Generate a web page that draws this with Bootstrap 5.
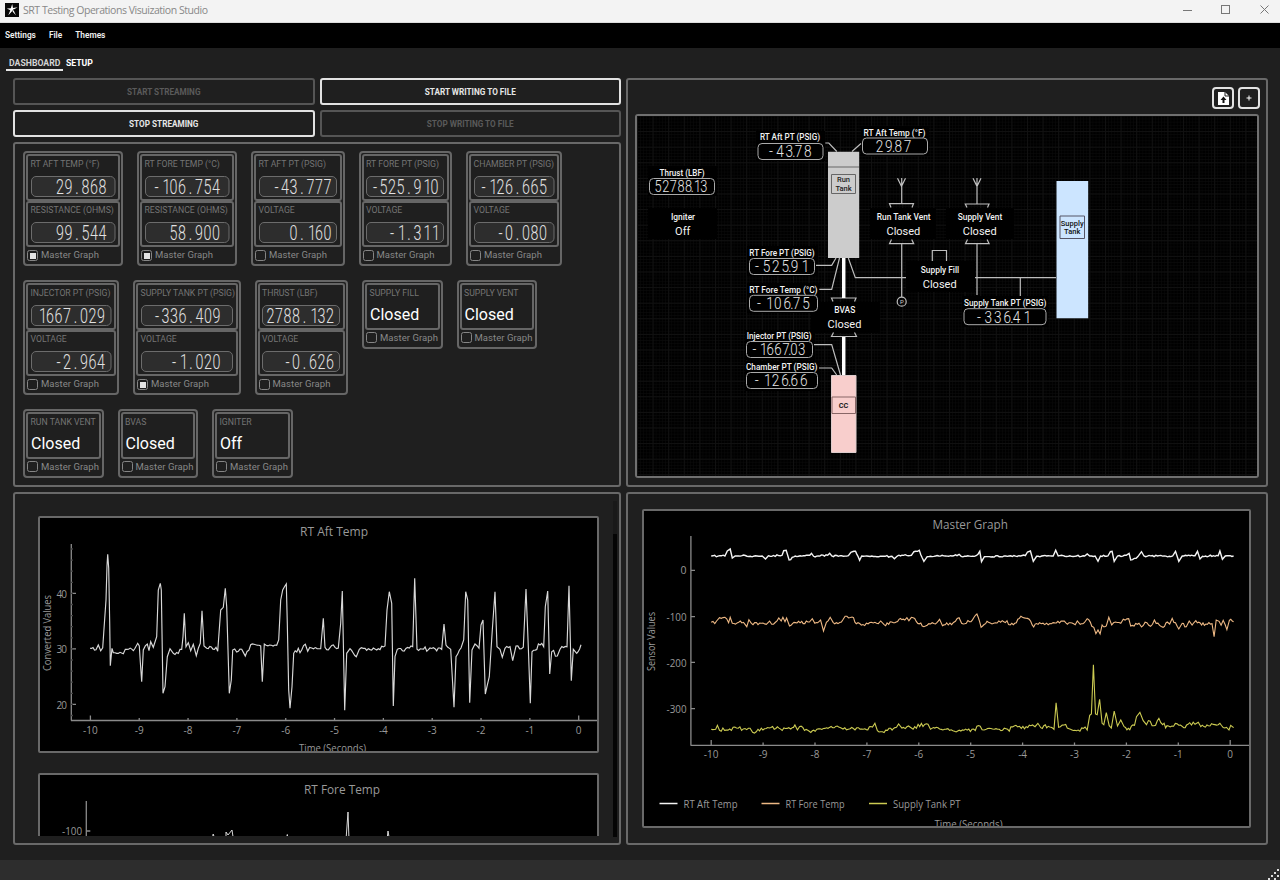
<!DOCTYPE html>
<html lang="en">
<head>
<meta charset="utf-8">
<title>SRT Testing Operations Visuization Studio</title>
<meta name="viewport" content="width=device-width, initial-scale=1">
<link rel="stylesheet" href="https://cdn.jsdelivr.net/npm/bootstrap@5.3.0/dist/css/bootstrap.min.css">
<style>
body{width:1280px;height:880px;overflow:hidden;background:#1f1f1f;font-family:Roboto,"Liberation Sans",sans-serif;font-size:9px;line-height:12px;color:#e6e6e6}
.titlebar{height:23px;background:#f3f3f3;color:#8c8c8c;font:11px/20px "Open Sans","Noto Sans",sans-serif;padding:0 10px 3px 5px;border-bottom:1px solid #ddd}
.menus{height:25px;background:#000;padding:0 0 2px 5px;gap:13px;font-size:8.3px;font-weight:600;color:#f2f2f2}
.tabs{height:30px;padding:8px 0 0 6px;font-size:8.7px;font-weight:700;color:#fff}
.tabs span{height:15px;padding:1px 1.5px 0;border-bottom:2px solid transparent}
.tabs .on{border-color:#e6e6e6;color:#d4d4d4;padding:1px 3px 0}
.workspace{height:767px;padding-left:13px;gap:5px}
.leftcol{width:608px;gap:5px}
.rightcol{width:642px;gap:5px}
.cmd{height:27px;border:2px solid #e2e2e2;border-radius:3px;background:transparent;color:#e6e6e6;font-size:8.2px;font-weight:700;padding:0;line-height:22px;flex:1}
.cmd:disabled{border-color:#555;color:#5a5a5a;opacity:1}
.pane{border:2px solid #696969;border-radius:3px}
.sensors{height:345px;padding:7px 8px;gap:14px}
.sensor{border:2px solid #666;border-radius:4px;padding:1px 1px 2px}
.reading{height:46.5px;border:2px solid #666;border-radius:3px;padding:1.5px 2.5px 0;color:#747474;font-size:8.7px;white-space:nowrap}
.reading svg{margin-top:6px;overflow:visible}
.state{font-size:16px;color:#fff;line-height:20px;margin-top:6.5px;padding-left:.5px}
.pick{height:14px;margin:1px 0 0 1px;color:#888;gap:3px;font-size:9.5px;white-space:nowrap;letter-spacing:.05px}
.pick i{width:11px;height:11px;border:1.5px solid #858585;border-radius:2.5px;flex:none}
.pick i.on{background:#e4e4e4;background-clip:content-box;padding:1.5px}
.pid{height:409px;padding:7px}
.tool{width:22px;height:22px;border:2px solid #e2e2e2;border-radius:4px}
.canvas{height:364px;border:2px solid #707070;border-radius:3px;overflow:hidden}
.graphs{height:353px;padding:14.5px 2px 7px 23px}
.scrollarea{width:561px;height:320px;margin-top:7.5px}
.plot{border:2px solid #696969;border-radius:2px;background:#000;overflow:hidden;flex:none}
.bar{width:4px;height:336px;margin-left:14px;margin-top:-7.5px;background:#050505;border-top:33px solid #191919}
.master{height:353px;padding:15px 15px 14px 14px}
.status{height:20px;background:#2d2d2d;margin-top:15px}
svg text{font-family:Roboto,sans-serif}
svg .ui{font-family:"Open Sans","Noto Sans",sans-serif;fill:#999}
</style>
</head>
<body class="d-flex flex-column m-0">
<header class="titlebar d-flex align-items-center justify-content-between flex-shrink-0">
  <div class="d-flex align-items-center" style="gap:4px">
    <svg width="14" height="14" viewBox="0 0 14 14"><path fill="#080808" d="M0 0h14v14H0z"/><path fill="#fff" d="M7.2 1l.8 4 4.6-.7-4.2 2.5 2.5 5.5-3.7-4-3.9 4 2-5-3.4-1.8 3.9-.2z"/><path stroke="#080808" stroke-width=".6" d="M5 12l4-6"/></svg>
    <svg width="190" height="18"><text class="ui" x="0" y="13" font-size="10.5" textLength="185" style="fill:#888">SRT Testing Operations Visuization Studio</text></svg>
  </div>
  <svg width="92" height="14" fill="none" stroke="#777"><path d="M5 7.5h9M82.5 2.5l8 8m0-8l-8 8"/><rect x="43.5" y="2.5" width="8" height="8"/></svg>
</header>
<nav class="menus d-flex align-items-center flex-shrink-0"><span>Settings</span><span>File</span><span>Themes</span></nav>
<nav class="tabs d-flex flex-shrink-0"><span class="on">DASHBOARD</span><span style="margin-left:1px">SETUP</span></nav>
<main class="workspace d-flex flex-shrink-0">
  <section class="leftcol d-flex flex-column">
    <div class="d-flex" style="gap:5px"><button class="cmd" disabled>START STREAMING</button><button class="cmd">START WRITING TO FILE</button></div>
    <div class="d-flex" style="gap:5px"><button class="cmd">STOP STREAMING</button><button class="cmd" disabled>STOP WRITING TO FILE</button></div>
    <div class="pane sensors d-flex flex-column" id="sensors"></div>
    <div class="pane graphs d-flex align-items-start">
      <div class="scrollarea overflow-hidden d-flex flex-column" style="gap:20px">
        <div class="plot" style="height:237px"><svg class="d-block" id="aft" width="557" height="233" viewBox="40 518 557 233"></svg></div>
        <div class="plot" style="height:237px"><svg class="d-block" id="fore" width="557" height="233" viewBox="40 775 557 233"></svg></div>
      </div>
      <div class="bar"></div>
    </div>
  </section>
  <section class="rightcol d-flex flex-column">
    <div class="pane pid">
      <div class="d-flex justify-content-end" style="gap:4px;height:26.5px;margin-right:-1px">
        <div class="tool"><svg class="d-block" width="18" height="18"><path fill="#fff" d="M4 3h7l4 4v9H4z"/><path stroke="#1f1f1f" fill="none" d="M11 3v4h4"/><path fill="#111" d="M9.5 7.5l3 3.5h-2v3h-2v-3h-2z"/></svg></div>
        <div class="tool"><svg class="d-block" width="18" height="18"><path stroke="#fff" d="M6.500 9h5M9 6.500v5"/></svg></div>
      </div>
      <div class="canvas"><svg class="d-block" id="diagram" width="620" height="360" viewBox="637 116 620 360"></svg></div>
    </div>
    <div class="pane master"><div class="plot" style="height:319px"><svg class="d-block" id="master" width="605" height="315" viewBox="644.5 511 605 315"></svg></div></div>
  </section>
</main>
<footer class="status d-flex justify-content-end align-items-end flex-shrink-0"><svg width="12" height="12" fill="#ddd"><path d="M9 1h2v2H9zM6 4h2v2H6zM9 7h2v2H9zM3 7h2v2H3zM6 10h2v2H6zM0 10h2v2H0z"/></svg></footer>
<script src="https://cdn.jsdelivr.net/npm/bootstrap@5.3.0/dist/js/bootstrap.bundle.min.js"></script>
<script>
// Readout text: one glyph per cell, right aligned at `last` (centre of last cell).
function lcd(value, last, base, pitch, size, inlineDot, color) {
  const k = Math.min(.8, pitch * .9 / (size * .535)), xs = []; let x = last;
  for (let i = value.length - 1; i >= 0; i--) {
    if (value[i] === '.' && inlineDot) xs.unshift(x + pitch * .5);
    else { xs.unshift(x + (value[i] === '1' ? 1.5 : 0)); x -= pitch; }
  }
  return `<text transform="scale(${k.toFixed(3)} 1)" x="${xs.map(v => (v / k).toFixed(1)).join(' ')}" y="${base}" text-anchor="middle" font-size="${size}" font-weight="300" fill="${color}">${value}</text>`;
}
const rows = [[
 [100,'RT AFT TEMP (°F)','29.868','RESISTANCE (OHMS)','99.544',8.5,1],
 [100,'RT FORE TEMP (°C)','-106.754','RESISTANCE (OHMS)','58.900',9,1],
 [93.5,'RT AFT PT (PSIG)','-43.777','VOLTAGE','0.160',5,0],
 [93.5,'RT FORE PT (PSIG)','-525.910','VOLTAGE','-1.311',5,0],
 [96,'CHAMBER PT (PSIG)','-126.665','VOLTAGE','-0.080',7,0]],[
 [96,'INJECTOR PT (PSIG)','1667.029','VOLTAGE','-2.964',6,0],
 [107.5,'SUPPLY TANK PT (PSIG)','-336.409','VOLTAGE','-1.020',12,1],
 [93.5,'THRUST (LBF)','2788.132','VOLTAGE','-0.626',5.5,0],
 [80.5,'SUPPLY FILL','Closed'],[80.5,'SUPPLY VENT','Closed']],[
 [80.5,'RUN TANK VENT','Closed'],[80.5,'BVAS','Closed'],[80.5,'IGNITER','Off']]];
const reading = (w, label, v, off) => `<div class="reading">${label}<svg class="d-block" width="${w - 15.5}" height="21"><rect x=".5" y=".5" width="${w - 16.5}" height="20" rx="4.5" fill="#2d2d2d" stroke="#6c6c6c"/>${lcd(v, w - 15.5 - off - 4.5, 17.8, 8.5, 20.5, false, '#e2e2e2')}</svg></div>`;
document.getElementById('sensors').innerHTML = rows.map(r => '<div class="d-flex align-items-start" style="gap:14px">' + r.map(([w, l, a, l2, b, off, on]) =>
 `<div class="sensor" style="width:${w}px">` + (b ? reading(w, l, a, off) + reading(w, l2, b, off) : `<div class="reading">${l}<div class="state">${a}</div></div>`) +
 `<div class="pick d-flex align-items-center"><i class="${on ? 'on' : ''}"></i>Master Graph</div></div>`).join('') + '</div>').join('');

const T = (x0, x1, y, s, size, cls = '', fill = '#f2f2f2', extra = '') => `<text class="${cls}" x="${x0}" y="${y}" textLength="${x1 - x0}" lengthAdjust="spacingAndGlyphs" font-size="${size}" ${cls ? '' : `fill="${fill}"`} ${extra}>${s}</text>`;
const C = (x, y, s, size, fill = '#f2f2f2', extra = '') => `<text x="${x}" y="${y}" text-anchor="middle" font-size="${size}" fill="${fill}" ${extra}>${s}</text>`;

// Piping diagram
(function () {
  let h = `<defs><pattern id="g1" x="637" y="115.5" width="3.12" height="3.12" patternUnits="userSpaceOnUse"><path d="M0 0H3.12M0 0V3.12" stroke="#0a0a0a" stroke-width="1"/></pattern><pattern id="g2" x="637" y="115.5" width="15.6" height="15.6" patternUnits="userSpaceOnUse"><path d="M0 .5H15.6M.5 0V15.6" stroke="#111"/></pattern></defs>
  <path fill="#000" d="M637 115h620v361H637z"/><path fill="url(#g1)" d="M637 115h620v361H637z"/><path fill="url(#g2)" d="M637 115h620v361H637z"/>`;
  h += '<g fill="#000">' + [[756,131,69,30],[861,126,68,30],[648,166,69,30],[648,208,69,31],[747,246,71,30],[747,283,73,30],[811,302,69,31],[745,330,70,30],[745,361,75,30],[870,208,66,31],[946,208,68,31],[906,261,69,31],[962,296,86,31]].map(r => `<rect x="${r[0]}" y="${r[1]}" width="${r[2]}" height="${r[3]}"/>`).join('') + '</g>';
  h += '<g fill="none" stroke="#bdbdbd" stroke-width="1.2"><path d="M825.3 143h3.5l8 8.5M861 143.5l-9 8M816 265.3h15.7L836 258M819.3 289.3h12.4L839.5 258M848.3 258l7 19.7H906M814 344.7h17.7L840.5 375M819 368h12.7l5 7"/><path d="M897.5 178.3l4 8 4-8M901.7 178v25.7M973 178.3l4 8 4-8M977 178v26M833 301.5l-1.5-3.5h24.5l-1.5 3.5M833.5 332.5l-2 4h25l-2-4M891 207.5l-1.5-3.8h24l-1.5 3.8M891.5 239.5l-2 4.2h24.2l-2-4.2M967 207.5l-1.7-3.5H989l-1.5 3.5M967.5 239.5l-2 4.2h23.6l-2-4.2"/><path d="M901.7 244v53M977 244v51M975 277.7h81M1020.3 278v18M932.3 261v-10.5h14.2V261"/><circle cx="901.7" cy="301.7" r="4.5"/></g>';
  h += '<path stroke="#fff" stroke-width="3.5" d="M843.7 258v40M843.7 337v38"/>' + C(901.8,304,'P',6,'#ccc');
  h += '<path fill="#ccc" d="M828 151.7h31.2v106.2H828z"/><path stroke="#666" fill="none" d="M828 167h31M831.5 174.5h24v19h-24z"/>' + C(843.5,182,'Run',7.5,'#222','font-weight="500"') + C(843.5,191,'Tank',7.5,'#222','font-weight="500"');
  h += '<path fill="#cce5ff" d="M1056.5 181h31.7v137.3h-31.7z"/><path stroke="#556" fill="none" d="M1060 216h24.5v22.5H1060z"/>' + C(1072.2,225.5,'Supply',7.5,'#111','font-weight="500"') + C(1072.2,234.3,'Tank',7.5,'#111','font-weight="500"');
  h += '<path fill="#f8cecc" stroke="#dcc" d="M831.5 375.5h24.5v77h-24.5z"/><path stroke="#866" fill="none" d="M832 397h23.5v16.5H832z"/>' + C(843.5,407.5,'CC',7.3,'#222','font-weight="700"');
  [[760,820,140,'RT Aft PT (PSIG)',758,143.5,65,'-43.78',807.7,9.2],[863.5,925.5,135.7,'RT Aft Temp (°F)',862.5,138,65,'29.87',907.5,9.3],[659.5,704.7,176,'Thrust (LBF)',649.5,178.5,65,'52788.13',703.8,7.6],[749.3,814.7,256,'RT Fore PT (PSIG)',749.5,258.5,65,'-525.91',804,9.4],[749.3,817.5,293,'RT Fore Temp (°C)',749.5,295.3,68,'-106.75',806,9.4],[746.7,811.7,339,'Injector PT (PSIG)',746.5,341.5,66,'-1667.03',801.5,7.9],[746,817.5,370,'Chamber PT (PSIG)',746.5,372.5,71,'-126.66',803.8,9.4],[964,1046.5,306,'Supply Tank PT (PSIG)',964,308.7,82,'-336.41',1026,9.4]].forEach(a => {
    h += T(a[0], a[1], a[2], a[3], 9, '', '#f2f2f2', 'font-weight="500"') + `<rect x="${a[4]}" y="${a[5]}" width="${a[6]}" height="16" rx="4" fill="#000" stroke="#aaa"/>` + lcd(a[7], a[8], a[5] + 14, a[9], 17, true, '#e6e6e6');
  });
  [[683,220,'Igniter','Off',235],[903.7,219.5,'Run Tank Vent','Closed',234.5],[980,219.5,'Supply Vent','Closed',234.5],[940,272.5,'Supply Fill','Closed',287.5],[844.8,313,'BVAS','Closed',328]].forEach(a => h += C(a[0], a[1], a[2], 8.4, '#f2f2f2', 'font-weight="500"') + C(a[0] - .3, a[4], a[3], 11, '#f2f2f2', ''));
  document.getElementById('diagram').innerHTML = h;
})();

// Traces: long gaps between listed points are filled with small sensor noise.
let seed = 7; const rnd = () => (seed = seed * 16807 % 2147483647) / 2147483647;
function trace(src, amp, gap, fx, fy) {
  const n = src.trim().split(/\s+/).map(p => p.split(',').map(Number)), out = [];
  n.forEach((p, i) => {
    if (i) { const q = n[i - 1], d = p[0] - q[0];
      if (d > gap * 2) { const m = Math.round(d / gap); for (let k = 1; k < m; k++) out.push([q[0] + d * k / m, q[1] + (p[1] - q[1]) * k / m + (rnd() + rnd() - 1) * amp]); } }
    out.push(p);
  });
  return out.map(p => fx(p[0]).toFixed(1) + ',' + fy(p[1]).toFixed(1)).join(' ');
}
const ax = (d, s = '#8a8a8a') => `<path d="${d}" stroke="${s}" fill="none" stroke-width="1.3"/>`;
(function () {
  const pts = '240,475 258,479 265,465 272,482 278,473 281,430 288,330 291,228 293,193 296,235 299,400 301,527 306,475 310,488 330,487 340,491 346,478 375,475 383,460 388,468 391,515 395,575 400,480 412,462 417,482 422,455 430,472 440,440 445,300 451,280 454,300 459,610 465,590 472,500 480,476 490,490 515,478 519,440 523,370 528,470 535,458 542,482 550,463 559,497 565,475 571,460 576,362 582,468 590,475 618,472 623,484 632,360 640,352 646,295 650,350 658,610 664,570 668,480 680,486 695,478 706,498 722,464 752,468 757,575 763,462 800,466 806,450 812,330 818,300 829,282 832,400 836,600 840,655 846,590 851,490 865,475 870,488 886,463 893,484 905,474 932,476 940,385 945,472 985,474 992,400 997,303 1004,661 1010,490 1020,476 1039,500 1048,478 1060,475 1100,480 1125,468 1131,360 1138,305 1145,340 1150,648 1155,500 1162,478 1208,470 1214,265 1221,478 1260,474 1295,478 1302,402 1308,465 1322,478 1332,652 1338,500 1353,474 1361,450 1367,305 1373,330 1379,638 1386,480 1395,462 1407,475 1413,405 1419,390 1426,612 1438,560 1447,420 1455,305 1461,470 1470,478 1477,502 1485,475 1500,470 1508,512 1518,468 1540,472 1548,297 1555,470 1561,640 1566,485 1590,465 1601,470 1606,350 1613,303 1619,552 1625,485 1642,498 1650,478 1671,470 1677,287 1684,572 1690,478 1700,490 1713,464';
  let h = ax('M71.3 544V720.5M71 720.5H597M71 593.4h5M71 648.8h5M71 704.3h5');
  for (let i = 0; i <= 10; i++) { const x = 90.4 + i * 48.83; h += ax(`M${x} 720v-${i % 10 ? 2 : 4.5}`) + `<text class="ui" x="${x}" y="734" text-anchor="middle" font-size="10">${i - 10}</text>`; }
  for (let y = 549; y < 720; y += 11.1) h += ax(`M71 ${y}h2`, '#444');
  [[40,597.5],[30,653],[20,708.5]].forEach(a => h += `<text class="ui" x="67" y="${a[1]}" text-anchor="end" font-size="10" textLength="10.5">${a[0]}</text>`);
  h += T(300,368,536.3,'RT Aft Temp',12,'ui') + T(299,366,752,'Time (Seconds)',10,'ui') + `<g transform="translate(50.5 671) rotate(-90)">${T(0,76,0,'Converted Values',10,'ui')}</g>`;
  h += `<polyline fill="none" stroke="#d8d8d8" stroke-width="1.15" points="${trace(pts, 9, 5, u => 10 + u / 3, v => 490 + v / 3)}"/>`;
  document.getElementById('aft').innerHTML = h;
  document.getElementById('fore').innerHTML = T(304,380,793.5,'RT Fore Temp',12,'ui') + T(62,82,835,'-100',10,'ui') + ax('M86.3 801v80M86.3 831h4') +
   '<path fill="none" stroke="#d8d8d8" d="M212 840l1.2-6 2 6M226 840v-8l2 3 4-5 1.5 10M286 840l1.3-5.5 1 5.5M346 840l2-28 1 28M387 840l1-9 1.5 9"/>';
})();
(function () {
  const fx = u => 630 + u / 2.412, fy = v => 490 + v / 3;
  const a = '197,198 230,198 236,183 243,177 248,204 255,198 320,198 328,207 335,197 368,196 372,182 378,181 385,210 400,198 435,196 439,190 444,199 478,196 483,190 488,198 528,197 534,187 545,184 555,211 560,198 633,199 639,206 646,198 680,196 686,185 699,181 710,214 718,200 790,197 795,193 800,199 836,197 845,184 849,215 856,200 955,197 960,186 967,183 974,214 982,199 1022,198 1028,181 1034,198 1098,198 1104,192 1110,198 1123,198 1130,214 1136,198 1154,198 1160,185 1164,184 1169,214 1177,198 1198,196 1205,190 1209,210 1222,205 1235,185 1241,198 1310,198 1317,184 1325,214 1333,198 1364,197 1370,184 1376,207 1382,199 1420,197 1424,183 1430,208 1437,198 1457,198';
  const f = '197,397 210,393 217,383 230,382 239,398 243,382 248,400 275,397 283,410 288,389 294,400 330,403 338,393 343,403 360,384 366,393 370,382 375,395 379,384 386,408 404,399 434,396 441,386 447,400 461,390 468,423 475,397 484,382 491,397 511,396 520,379 537,381 547,401 600,401 606,393 614,404 640,398 650,388 664,390 669,383 674,392 680,382 692,395 706,408 738,402 748,388 755,407 765,399 777,404 786,394 795,383 801,400 820,395 838,372 848,412 866,397 895,397 922,400 933,398 944,379 964,388 975,411 989,398 1010,404 1045,393 1075,404 1080,393 1087,403 1097,398 1104,386 1115,409 1120,412 1125,431 1130,420 1135,432 1140,405 1150,408 1156,382 1163,405 1172,396 1185,400 1191,388 1204,386 1209,408 1229,400 1235,411 1248,398 1257,409 1266,390 1287,412 1297,396 1303,402 1309,385 1325,417 1333,400 1343,410 1350,393 1357,405 1366,392 1380,405 1390,402 1405,401 1410,440 1415,390 1422,394 1427,406 1432,391 1437,405 1441,419 1447,391 1457,395';
  const s = '197,718 208,718 212,706 217,721 258,714 291,715 297,727 310,718 384,713 389,717 399,705 405,720 410,710 430,721 448,724 460,716 490,713 501,708 515,717 532,716 560,717 586,711 592,700 598,722 610,725 630,715 644,712 649,702 657,714 673,708 680,714 720,703 726,718 740,712 780,722 830,717 846,709 855,720 880,718 912,718 932,706 945,715 972,705 978,710 985,700 992,713 1010,709 1024,718 1029,638 1035,712 1048,705 1060,716 1078,722 1099,711 1104,720 1110,676 1114,672 1119,524 1124,672 1128,674 1134,628 1140,700 1144,704 1150,668 1157,707 1162,714 1169,663 1177,708 1185,690 1193,710 1203,715 1218,706 1223,680 1231,667 1239,692 1247,704 1256,694 1265,707 1277,685 1286,704 1300,708 1329,705 1337,713 1347,703 1364,703 1372,697 1378,710 1400,708 1420,704 1440,712 1446,720 1450,706 1457,713';
  let h = ax('M691.4 536V745.3M691 745.3H1250M691 570.3h4.5M691 616.7h4.5M691 662.3h4.5M691 708.7h4.5');
  for (let i = 0; i <= 10; i++) { const x = 711.7 + i * 51.9; h += ax(`M${x} 745v-${i % 10 ? 2.5 : 5}`) + `<text class="ui" x="${x}" y="758" text-anchor="middle" font-size="10">${i - 10}</text>`; }
  [[681,0,574.3],[667,-100,620.6],[667,-200,666.5],[667,-300,713]].forEach(a => h += T(a[0], 687, a[2], a[1], 10, 'ui'));
  h += T(933,1008.5,528.5,'Master Graph',12,'ui') + T(935,1003,827.5,'Time (Seconds)',10,'ui') + `<g transform="translate(655 671) rotate(-90)">${T(0,59,0,'Sensor Values',10,'ui')}</g>`;
  [['#f4f4f4',a,3,1.4],['#edb884',f,7,1.1],['#cccb52',s,8,1.1]].forEach(q => h += `<polyline fill="none" stroke="${q[0]}" stroke-width="${q[3]}" points="${trace(q[1], q[2], 4, fx, fy)}"/>`);
  [[660,684,738,'RT Aft Temp','#f4f4f4'],[762,786,845,'RT Fore Temp','#edb884'],[869.5,893.5,961,'Supply Tank PT','#cccb52']].forEach(l => h += `<path stroke="${l[4]}" stroke-width="1.5" d="M${l[0]} 803.5h18"/>` + T(l[1], l[2], 808.2, l[3], 10.5, 'ui'));
  document.getElementById('master').innerHTML = h;
})();
</script>
</body>
</html>
